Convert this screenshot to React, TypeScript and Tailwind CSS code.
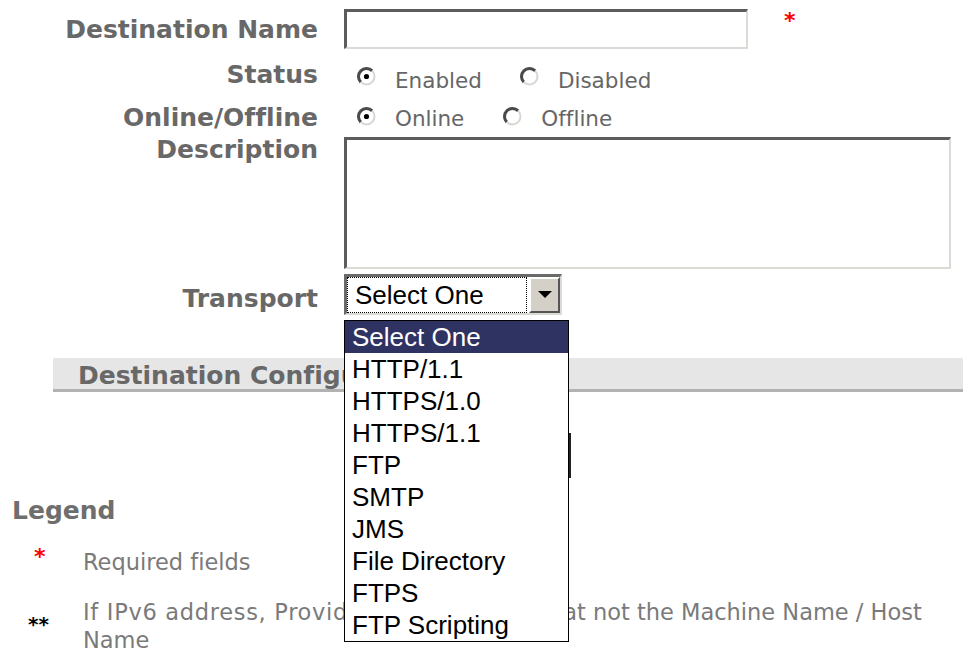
import React from "react";

const transports = [
  "Select One",
  "HTTP/1.1",
  "HTTPS/1.0",
  "HTTPS/1.1",
  "FTP",
  "SMTP",
  "JMS",
  "File Directory",
  "FTPS",
  "FTP Scripting",
];

// classic sunken 3d edge used by the text boxes
const sunken =
  "border-t-[3px] border-l-[3px] border-b-2 border-r-2 border-t-[#5c5c5c] border-l-[#5c5c5c] border-b-[#dcdad4] border-r-[#dcdad4] bg-white outline-none";

function Radio({ checked = false }: { checked?: boolean }) {
  return (
    <svg width="19" height="19" viewBox="0 0 19 19" className="block shrink-0">
      <circle cx="9.5" cy="9.5" r="8" fill="#fff" />
      <path d="M3.84 15.16A8 8 0 0 1 15.16 3.84" fill="none" stroke="#4a4a4a" strokeWidth="3" />
      <path d="M15.16 3.84A8 8 0 0 1 3.84 15.16" fill="none" stroke="#d8d6d0" strokeWidth="2" />
      {checked && <circle cx="9.5" cy="9.5" r="2.6" fill="#000" />}
    </svg>
  );
}

function Label({ children, className = "" }: { children: React.ReactNode; className?: string }) {
  return (
    <div className={`w-[318px] shrink-0 text-right text-[25px] font-bold leading-[25px] text-[#686868] ${className}`}>
      {children}
    </div>
  );
}

function Option({ text, mt }: { text: string; mt: string }) {
  return <span className={`ml-[19px] text-[21.5px] leading-[21.5px] text-[#666] ${mt}`}>{text}</span>;
}

export default function App() {
  return (
    <div className="relative h-[648px] w-full overflow-hidden bg-white font-['DejaVu_Sans',sans-serif] [font-variant-ligatures:none]">
      <div className="pt-[9px]">
        <div className="flex h-[40px] items-center">
          <Label>Destination Name</Label>
          <input readOnly className={`ml-[26px] h-[40px] w-[404px] ${sunken}`} />
          <span className="ml-[36px] mt-[1px] self-start text-[22px] font-bold leading-[22px] text-[#f00]">*</span>
        </div>

        <div className="flex h-[48px] items-start">
          <Label className="mt-[13px]">Status</Label>
          <div className="ml-[26px] flex items-start pl-[13px]">
            <div className="mt-[18px]"><Radio checked /></div>
            <Option text="Enabled" mt="mt-[21px]" />
            <div className="ml-[38px] mt-[18px]"><Radio /></div>
            <Option text="Disabled" mt="mt-[21px]" />
          </div>
        </div>

        <div className="flex h-[40px] items-start">
          <Label className="mt-[8px]">Online/Offline</Label>
          <div className="ml-[26px] flex items-start pl-[13px]">
            <div className="mt-[10px]"><Radio checked /></div>
            <Option text="Online" mt="mt-[11px]" />
            <div className="ml-[39px] mt-[10px]"><Radio /></div>
            <Option text="Offline" mt="mt-[11px]" />
          </div>
        </div>

        <div className="flex items-start">
          <Label>Description</Label>
          <textarea readOnly className={`ml-[26px] h-[132px] w-[607px] resize-none ${sunken}`} />
        </div>

        <div className="mt-[5px] flex h-[41px] items-start">
          <Label className="mt-[12px]">Transport</Label>
          <div className="ml-[26px] flex h-[41px] w-[218px] border-t-[3px] border-l-[3px] border-b-2 border-r-2 border-t-[#6a6a6a] border-l-[#6a6a6a] border-b-[#dcdad4] border-r-[#dcdad4] bg-white font-['Liberation_Sans',Arial,sans-serif]">
            <div className="mr-[2px] flex-1 border border-dotted border-black pl-[7px] text-[26px] leading-[34px] text-black">
              Select One
            </div>
            <div className="flex w-[31px] items-center justify-center border-t-2 border-l-2 border-b-2 border-r-2 border-t-white border-l-white border-b-[#555] border-r-[#555] bg-[#d4d0c8]">
              <svg width="14" height="8" viewBox="0 0 14 8">
                <path d="M0 0h14L7 7z" fill="#000" />
              </svg>
            </div>
          </div>
        </div>

        <div className="ml-[53px] mt-[43px] h-[34px] border-b-[3px] border-[#b2b2b2] bg-[#e6e6e6] pl-[25px] pt-[5px] text-[25px] font-bold leading-[25px] text-[#686868]">
          Destination Configuration
        </div>

        <div className="ml-[420px] mt-[41px] h-[45px] w-[151px] border-r-[3px] border-[#222] bg-[#d4d0c8]" />

        <div className="ml-[12px] mt-[20px] text-[25px] font-bold leading-[25px] text-[#6e6e6e]">Legend</div>

        <div className="mt-[28px] flex items-start">
          <span className="-mt-[5px] w-[83px] shrink-0 pl-[34px] text-[22px] font-bold leading-[22px] text-[#f00]">*</span>
          <span className="text-[22.5px] leading-[22.5px] text-[#7a7a7a]">Required fields</span>
        </div>

        <div className="mt-[24.5px] flex items-start">
          <span className="mt-[16px] w-[83px] shrink-0 pl-[28px] text-[20px] font-bold leading-[20px] text-black">**</span>
          <p className="text-[22.5px] leading-[28px] text-[#7a7a7a]">
            <span className="tracking-[0.7px]">If IPv6 address, Provi</span>
            <span className="tracking-[-0.45px]">de IP Address in form</span>
            at not the Machine Name / Host
            <br />
            Name
          </p>
        </div>
      </div>

      {/* open transport list */}
      <ul className="absolute left-[344px] top-[320px] z-10 w-[225px] border border-black bg-white font-['Liberation_Sans',Arial,sans-serif] text-[26px] leading-[32px] text-black">
        {transports.map((t, i) => (
          <li key={t} className={`h-[32px] pl-[7px] ${i === 0 ? "bg-[#2f3362] text-white" : ""}`}>
            {t}
          </li>
        ))}
      </ul>
    </div>
  );
}
